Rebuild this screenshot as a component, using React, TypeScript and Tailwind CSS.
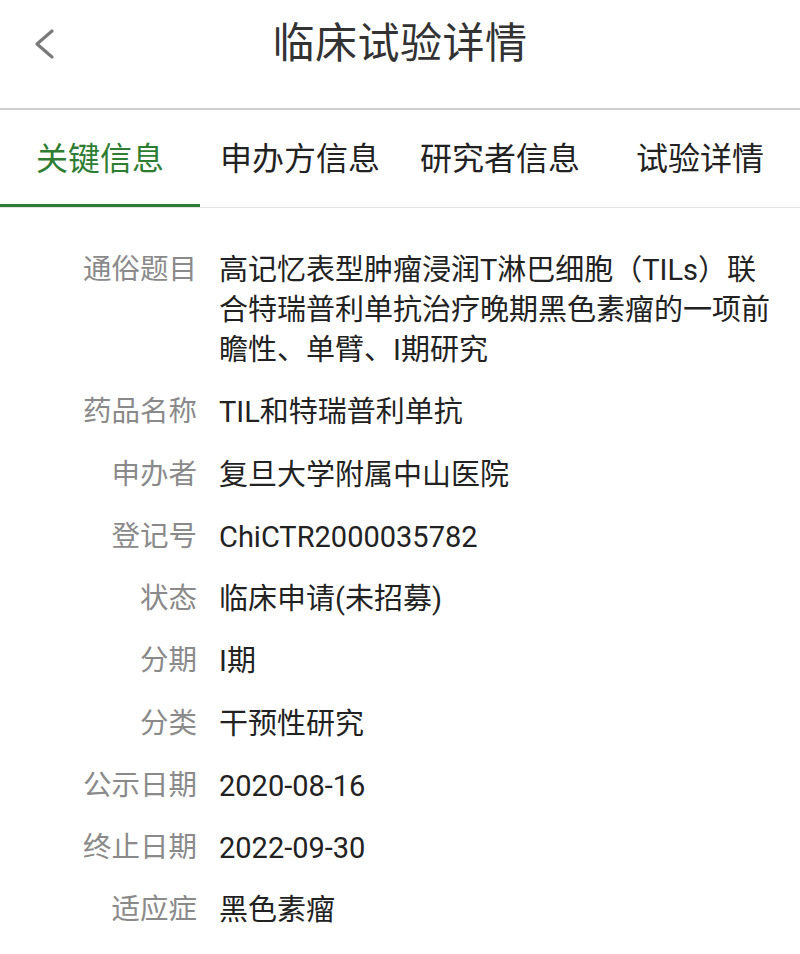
import React from "react";

// ── 数据 ─────────────────────────────────────
const TABS = ["关键信息", "申办方信息", "研究者信息", "试验详情"];

const ROWS: { label: string; value: string }[] = [
  {
    label: "通俗题目",
    value: "高记忆表型肿瘤浸润T淋巴细胞（TILs）联合特瑞普利单抗治疗晚期黑色素瘤的一项前瞻性、单臂、I期研究",
  },
  { label: "药品名称", value: "TIL和特瑞普利单抗" },
  { label: "申办者", value: "复旦大学附属中山医院" },
  { label: "登记号", value: "ChiCTR2000035782" },
  { label: "状态", value: "临床申请(未招募)" },
  { label: "分期", value: "I期" },
  { label: "分类", value: "干预性研究" },
  { label: "公示日期", value: "2020-08-16" },
  { label: "终止日期", value: "2022-09-30" },
  { label: "适应症", value: "黑色素瘤" },
];

function BackIcon() {
  return (
    <svg width="24" height="32" viewBox="0 0 24 32" fill="none">
      <path
        d="M20 3 L5 16 L20 29"
        stroke="#7a7a7a"
        strokeWidth="3.2"
        strokeLinecap="round"
        strokeLinejoin="round"
      />
    </svg>
  );
}

export default function App() {
  const active = 0;

  return (
    <div
      className="min-h-screen bg-white"
      style={{ fontFamily: 'Roboto, "Noto Sans CJK SC", sans-serif' }}
    >
      {/* Header */}
      <div className="h-[110px] border-b-2 border-[#cfcfcf]">
        <div className="relative h-[88px] flex items-center justify-center">
          <button className="absolute left-[32px] top-[28px]">
            <BackIcon />
          </button>
          <h1 className="text-[42px] leading-none text-[#333] tracking-[0.5px]">临床试验详情</h1>
        </div>
      </div>

      {/* Tabs */}
      <div className="grid grid-cols-4 border-b border-[#e3e3e3]">
        {TABS.map((t, i) => (
          <div
            key={t}
            className={`h-[97px] flex items-center justify-center text-[32px] ${
              i === active
                ? "text-[#2e7d32] border-b-[3px] border-[#2e7d32] -mb-px pt-[3px]"
                : "text-[#222]"
            }`}
          >
            {t}
          </div>
        ))}
      </div>

      {/* Rows */}
      <div className="pt-[42px] pr-[22px] flex flex-col gap-[22.25px]">
        {ROWS.map((r) => (
          <div key={r.label} className="flex leading-[40px]">
            <div className="w-[197px] shrink-0 text-right text-[28.5px] text-[#8a8a8a]">{r.label}</div>
            <div className="pl-[22px] flex-1 text-[29px] text-[#222]">{r.value}</div>
          </div>
        ))}
      </div>
    </div>
  );
}
